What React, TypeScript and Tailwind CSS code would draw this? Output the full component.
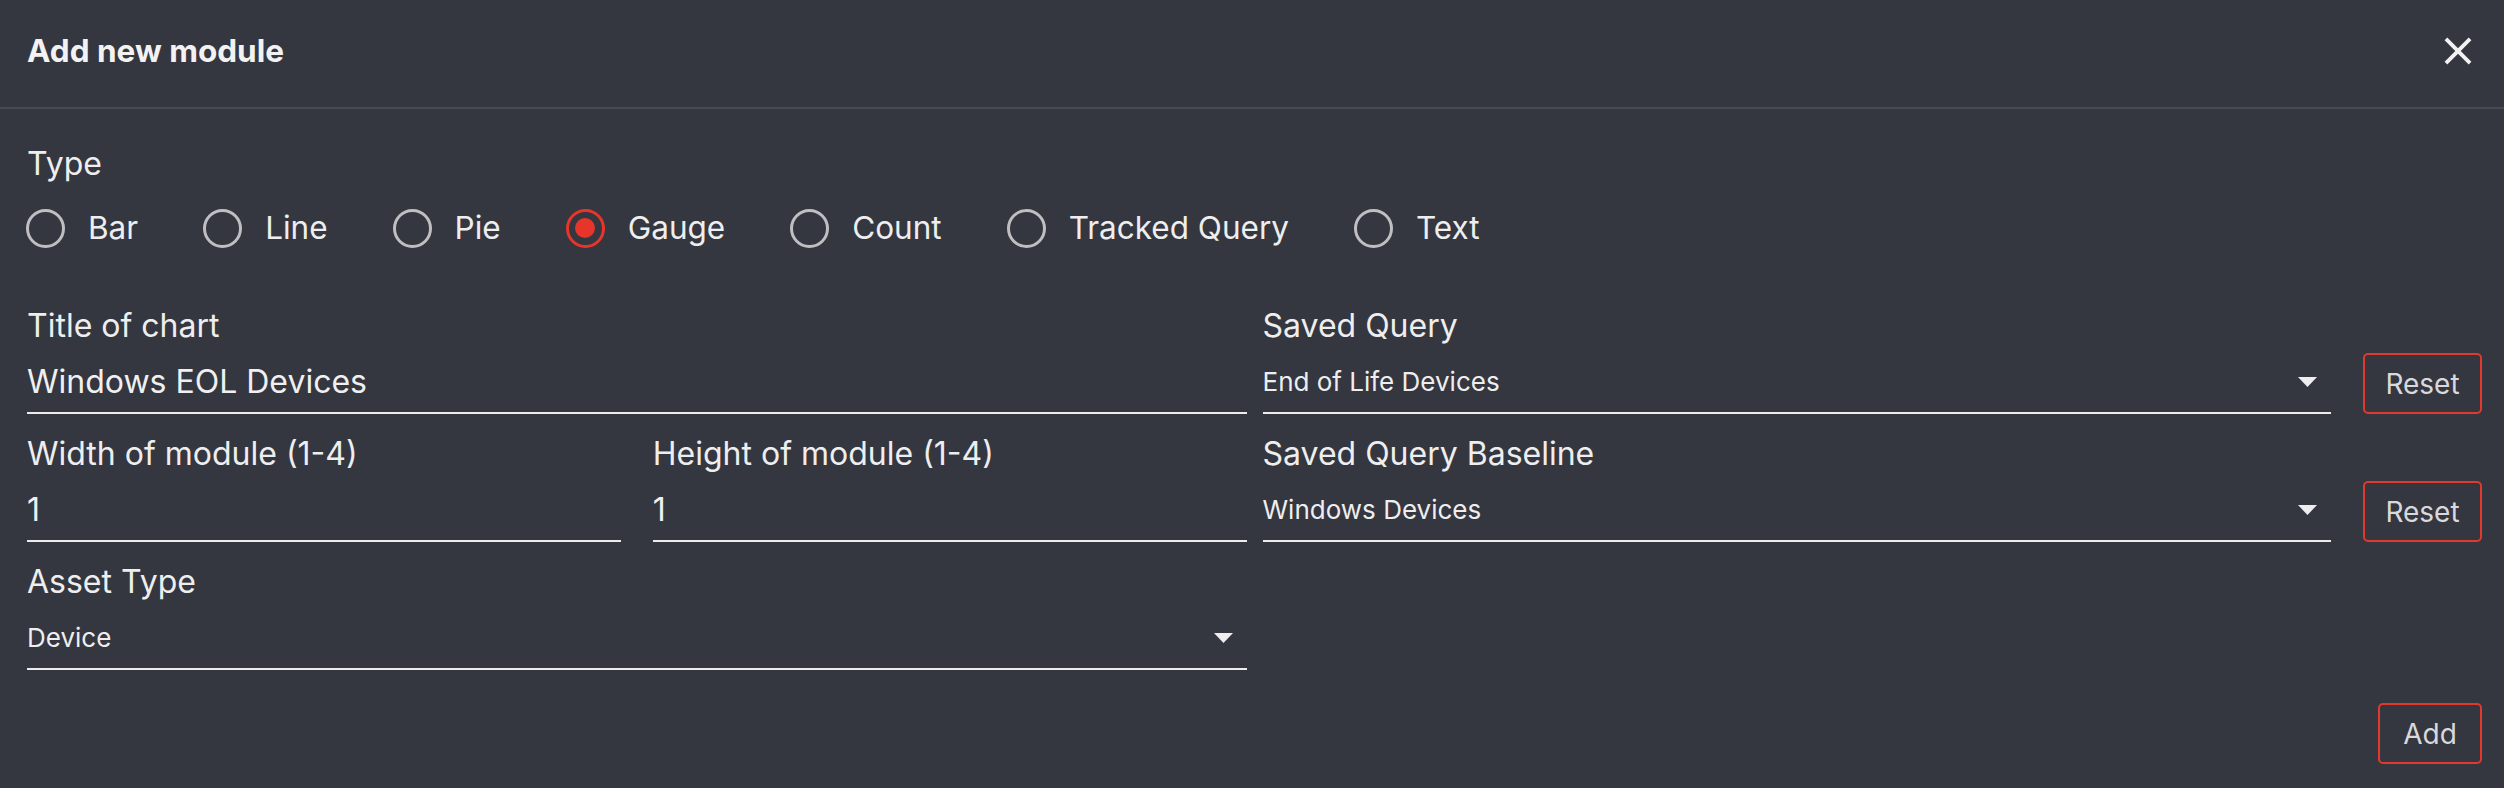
import React from "react";

function Arrow() {
  return (
    <svg width="19" height="10" viewBox="0 0 19 10" className="mr-[14px] shrink-0">
      <polygon points="0,0 19,0 9.5,10" fill="#eeeeee" />
    </svg>
  );
}

function Field({ label, value, select }: { label: string; value: string; select?: boolean }) {
  return (
    <div className="flex flex-col min-w-0">
      <div className="text-[32px] leading-[36px] text-[#eeeeee] whitespace-nowrap">{label}</div>
      <div className="mt-[20px] h-[36px] flex items-center justify-between">
        <span className={select ? "text-[26px] leading-[36px] text-[#eeeeee]" : "text-[32px] leading-[36px] text-[#f0f0f0]"}>
          {value}
        </span>
        {select ? <Arrow /> : null}
      </div>
      <div className="mt-[12px] h-[2px] bg-[#ececec]" />
    </div>
  );
}

function OutlineButton({ children, w }: { children: React.ReactNode; w: string }) {
  return (
    <button
      className={`${w} h-[61px] shrink-0 border-2 border-[#e3382b] rounded-[5px] text-[28px] leading-none text-[#d9d9dc] flex items-center justify-center`}
    >
      {children}
    </button>
  );
}

function Radio({ label, checked }: { label: string; checked?: boolean }) {
  return (
    <div className="flex items-center gap-[23px]">
      {checked ? (
        <div className="w-[39px] h-[39px] rounded-full border-[3px] border-[#e8352a] flex items-center justify-center">
          <div className="w-[20px] h-[20px] rounded-full bg-[#e8352a]" />
        </div>
      ) : (
        <div className="w-[39px] h-[39px] rounded-full border-[3px] border-[#bfbfc2]" />
      )}
      <span className="text-[31.5px] leading-[36px] text-[#eeeeee]">{label}</span>
    </div>
  );
}

export default function App() {
  const types = ["Bar", "Line", "Pie", "Gauge", "Count", "Tracked Query", "Text"];
  return (
    <div className="w-[2504px] h-[788px] bg-[#343640] overflow-hidden font-['Inter','Noto_Sans',sans-serif]">
      <div className="flex items-center justify-between h-[107px] pb-[5px] pl-[27px] pr-[23px]">
        <h2 className="text-[31.5px] font-bold leading-none text-[#f2f2f2]">Add new module</h2>
        <svg width="46" height="46" viewBox="0 0 24 24">
          <path
            fill="#f2f2f2"
            d="M19 6.41 17.59 5 12 10.59 6.41 5 5 6.41 10.59 12 5 17.59 6.41 19 12 13.41 17.59 19 19 17.59 13.41 12z"
          />
        </svg>
      </div>
      <div className="h-[2px] bg-[#474954]" />
      <div className="pl-[27px] pr-[22px]">
        <div className="mt-[37px] text-[32px] leading-[36px] text-[#eeeeee]">Type</div>
        <div className="mt-[17px] h-[58px] flex items-center gap-[65px] -ml-[1px]">
          {types.map((t) => (
            <Radio key={t} label={t} checked={t === "Gauge"} />
          ))}
        </div>
        <div className="mt-[51px] grid grid-cols-2 gap-x-[16px] gap-y-[22px]">
          <Field label="Title of chart" value="Windows EOL Devices" />
          <div className="flex items-end gap-[32px]">
            <div className="flex-1 min-w-0">
              <Field label="Saved Query" value="End of Life Devices" select />
            </div>
            <OutlineButton w="w-[119px]">Reset</OutlineButton>
          </div>
          <div className="grid grid-cols-2 gap-x-[32px]">
            <Field label="Width of module (1-4)" value="1" />
            <Field label="Height of module (1-4)" value="1" />
          </div>
          <div className="flex items-end gap-[32px]">
            <div className="flex-1 min-w-0">
              <Field label="Saved Query Baseline" value="Windows Devices" select />
            </div>
            <OutlineButton w="w-[119px]">Reset</OutlineButton>
          </div>
          <Field label="Asset Type" value="Device" select />
          <div />
        </div>
        <div className="mt-[33px] flex justify-end">
          <OutlineButton w="w-[104px]">Add</OutlineButton>
        </div>
      </div>
    </div>
  );
}
